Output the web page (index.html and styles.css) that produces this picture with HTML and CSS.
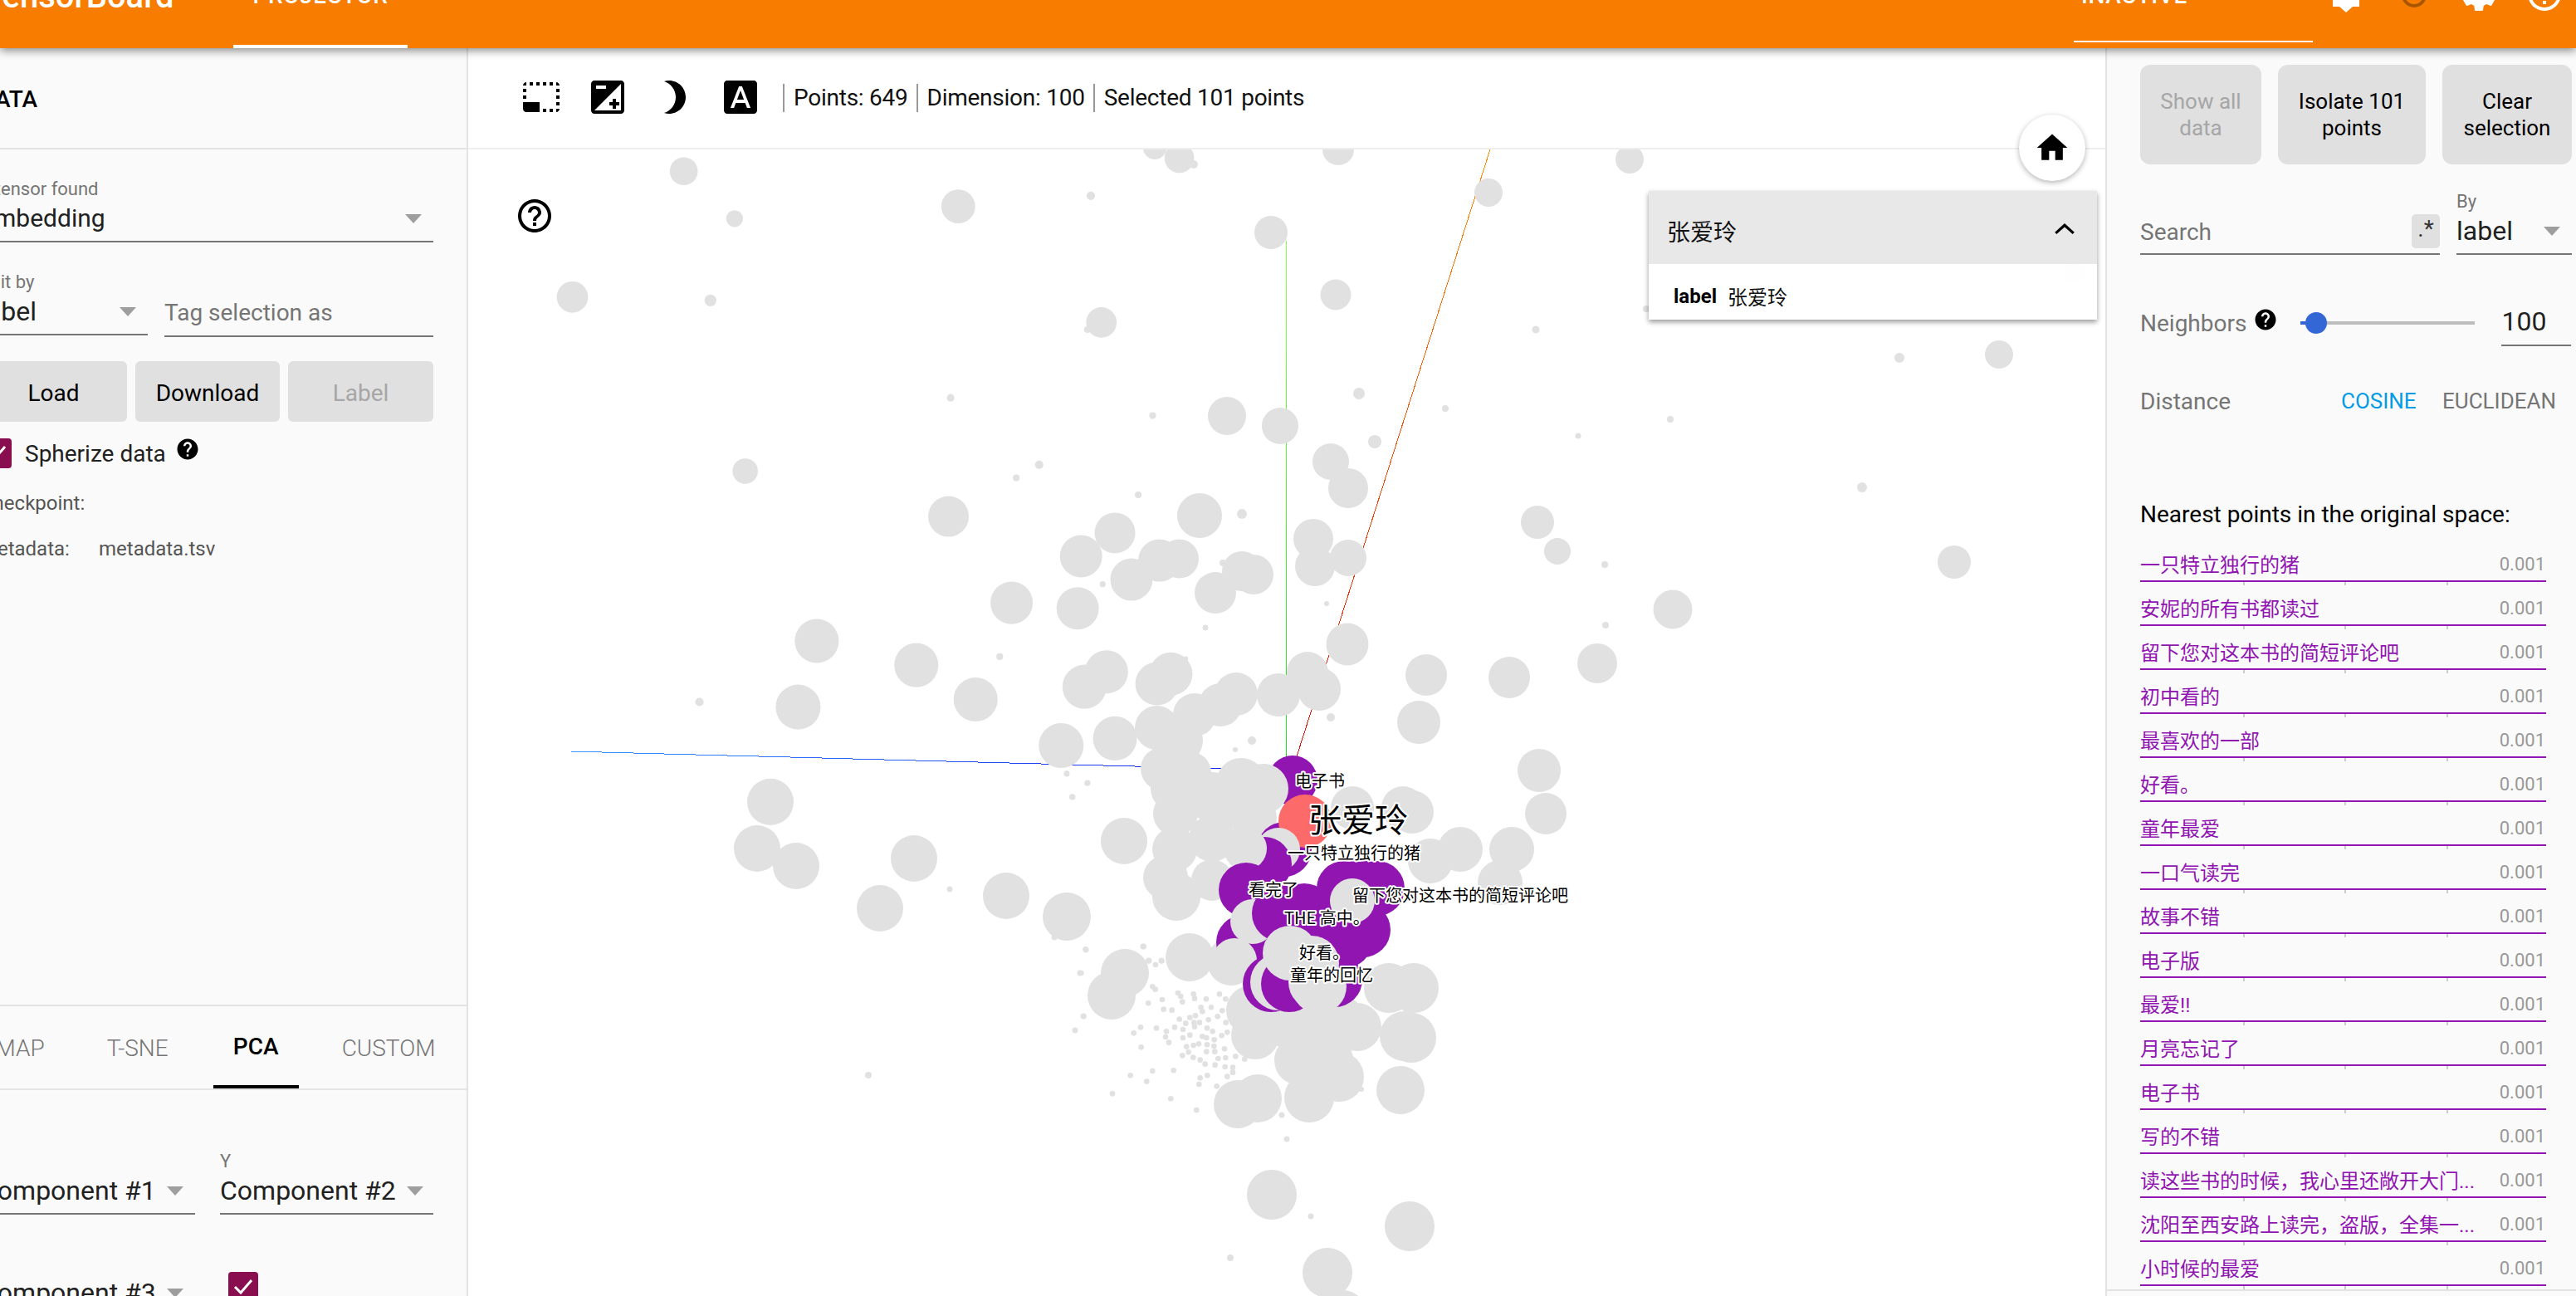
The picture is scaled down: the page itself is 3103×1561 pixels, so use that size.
FILE: index.html
```html
<!DOCTYPE html>
<html lang="en">
<head>
<meta charset="utf-8">
<title>TensorBoard Projector</title>
<link rel="stylesheet" href="styles.css">
</head>
<body>
<header class="topbar">
  <div class="brand">TensorBoard</div>
  <div class="tab-active"><span>PROJECTOR</span></div>
  <div class="run-select"><span>INACTIVE</span></div>
  <svg class="top-icon tag" viewBox="0 0 32 48"><path d="M0 0H32V39H24L16 46L8 39H0Z"/></svg>
  <svg class="top-icon refresh" viewBox="0 0 48 48"><circle cx="24" cy="24" r="13" fill="none" stroke-width="4"/></svg>
  <svg class="top-icon gear" viewBox="0 0 24 24"><path d="M19.43 12.98c.04-.32.07-.64.07-.98s-.03-.66-.07-.98l2.11-1.65c.19-.15.24-.42.12-.64l-2-3.46c-.12-.22-.39-.3-.61-.22l-2.49 1c-.52-.4-1.08-.73-1.69-.98l-.38-2.65C14.46 2.18 14.25 2 14 2h-4c-.25 0-.46.18-.49.42l-.38 2.65c-.61.25-1.17.59-1.69.98l-2.49-1c-.23-.09-.49 0-.61.22l-2 3.46c-.13.22-.07.49.12.64l2.11 1.65c-.04.32-.07.65-.07.98s.03.66.07.98l-2.11 1.65c-.19.15-.24.42-.12.64l2 3.46c.12.22.39.3.61.22l2.49-1c.52.4 1.08.73 1.69.98l.38 2.65c.03.24.24.42.49.42h4c.25 0 .46-.18.49-.42l.38-2.65c.61-.25 1.17-.59 1.69-.98l2.49 1c.23.09.49 0 .61-.22l2-3.46c.12-.22.07-.49-.12-.64l-2.11-1.65zM12 15.5c-1.93 0-3.5-1.57-3.5-3.5s1.57-3.5 3.5-3.5 3.5 1.57 3.5 3.5-1.57 3.5-3.5 3.5z"/></svg>
  <svg class="top-icon help-top" viewBox="0 0 24 24"><path d="M11 18h2v-2h-2v2zm1-16C6.48 2 2 6.48 2 12s4.48 10 10 10 10-4.48 10-10S17.52 2 12 2zm0 18c-4.41 0-8-3.59-8-8s3.59-8 8-8 8 3.59 8 8-3.59 8-8 8zm0-14c-2.21 0-4 1.79-4 4h2c0-1.1.9-2 2-2s2 .9 2 2c0 2-3 1.75-3 5h2c0-2.25 3-2.5 3-5 0-2.21-1.79-4-4-4z"/></svg>
</header>

<main class="layout">
  <aside class="left-panel">
    <div class="left-inner">
      <div class="data-head">DATA</div>
      <section class="data-section">
        <div class="field first-field">
          <div class="field-label">1 tensor found</div>
          <div class="control embed"><span>Embedding</span><i class="caret"></i></div>
        </div>
        <div class="edit-row">
          <div class="field">
            <div class="field-label">Edit by</div>
            <div class="control"><span>label</span><i class="caret"></i></div>
          </div>
          <div class="tag-input">Tag selection as</div>
        </div>
        <div class="btn-row">
          <div class="btn">Load</div>
          <div class="btn">Download</div>
          <div class="btn disabled">Label</div>
        </div>
        <div class="sphere-row">
          <svg class="checkbox" viewBox="0 0 36 36"><path d="M8 18L15 25L28 10"/></svg>
          <span class="sphere-label">Spherize data</span>
          <svg class="help-fill" viewBox="0 0 24 24"><path d="M12 2C6.48 2 2 6.48 2 12s4.48 10 10 10 10-4.48 10-10S17.52 2 12 2zm1 17h-2v-2h2v2zm2.07-7.75l-.9.92C13.45 12.9 13 13.5 13 15h-2v-.5c0-1.1.45-2.1 1.17-2.83l1.24-1.26c.37-.36.59-.86.59-1.41 0-1.1-.9-2-2-2s-2 .9-2 2H8c0-2.21 1.79-4 4-4s4 1.79 4 4c0 .88-.36 1.68-.93 2.25z"/></svg>
        </div>
        <div class="meta-line checkpoint">Checkpoint:</div>
        <div class="meta-line metadata"><span class="meta-key">Metadata:</span><span>metadata.tsv</span></div>
      </section>
      <nav class="proj-tabs">
        <span class="proj-tab umap">UMAP</span>
        <span class="proj-tab tsne">T-SNE</span>
        <span class="proj-tab current">PCA</span>
        <span class="proj-tab">CUSTOM</span>
      </nav>
      <section class="pca-grid">
        <div class="field">
          <div class="field-label">X</div>
          <div class="control"><span>Component #1</span><i class="caret"></i></div>
        </div>
        <div class="field">
          <div class="field-label">Y</div>
          <div class="control"><span>Component #2</span><i class="caret"></i></div>
        </div>
        <div class="field z-field">
          <div class="control"><span>Component #3</span><i class="caret"></i></div>
        </div>
        <div class="z-check">
          <svg class="checkbox" viewBox="0 0 36 36"><path d="M8 18L15 25L28 10"/></svg>
        </div>
      </section>
    </div>
  </aside>

  <section class="center">
    <div class="toolbar">
      <svg class="tool" viewBox="0 0 24 24"><path d="M23 15h-2v2h2v-2zm0-4h-2v2h2v-2zm0 8h-2v2c1 0 2-1 2-2zM15 3h-2v2h2V3zm8 4h-2v2h2V7zm-2-4v2h2c0-1-1-2-2-2zM3 21h8v-6H1v4c0 1.1.9 2 2 2zM3 7H1v2h2V7zm12 12h-2v2h2v-2zm4-16h-2v2h2V3zm0 16h-2v2h2v-2zM3 3C2 3 1 4 1 5h2V3zm0 8H1v2h2v-2zm8-8H9v2h2V3zM7 3H5v2h2V3z"/></svg>
      <svg class="tool" viewBox="0 0 24 24"><path d="M15 17v2h2v-2h2v-2h-2v-2h-2v2h-2v2h2zm5-15H4c-1.1 0-2 .9-2 2v16c0 1.1.9 2 2 2h16c1.1 0 2-.9 2-2V4c0-1.1-.9-2-2-2zM5 5h6v2H5V5zm15 15H4L20 4v16z"/></svg>
      <svg class="tool" viewBox="0 0 24 24"><path d="M9 2c-1.05 0-2.05.16-3 .46 4.06 1.27 7 5.06 7 9.54 0 4.48-2.94 8.27-7 9.54.95.3 1.95.46 3 .46 5.52 0 10-4.48 10-10S14.52 2 9 2z"/></svg>
      <svg class="tool" viewBox="0 0 24 24"><path d="M9.93 13.5h4.14L12 7.98zM20 2H4c-1.1 0-2 .9-2 2v16c0 1.1.9 2 2 2h16c1.1 0 2-.9 2-2V4c0-1.1-.9-2-2-2zm-4.05 16.5l-1.14-3H9.17l-1.12 3H5.96l5.11-13h1.86l5.11 13h-2.09z"/></svg>
      <div class="stats">
        <span>Points: 649</span>
        <span>Dimension: 100</span>
        <span>Selected 101 points</span>
      </div>
    </div>

    <div class="plot">
      <svg class="scatter" viewBox="564 180 1972 1381" preserveAspectRatio="none">
        <defs>
          <linearGradient id="axis-x" gradientUnits="userSpaceOnUse" x1="687" y1="905" x2="1480" y2="926"><stop offset="0" stop-color="#3a96ff"/><stop offset="1" stop-color="#1020ee"/></linearGradient>
          <linearGradient id="axis-y" gradientUnits="userSpaceOnUse" x1="1549" y1="290" x2="1549" y2="930"><stop offset="0" stop-color="#90ff50"/><stop offset="1" stop-color="#18e020"/></linearGradient>
          <linearGradient id="axis-z" gradientUnits="userSpaceOnUse" x1="1795" y1="180" x2="1556" y2="930"><stop offset="0" stop-color="#ff8c00"/><stop offset="1" stop-color="#f00808"/></linearGradient>
        </defs>
        <line class="axis" x1="687" y1="905" x2="1480" y2="926" stroke="url(#axis-x)"/>
        <line class="axis" x1="1549" y1="290" x2="1549" y2="930" stroke="url(#axis-y)"/>
        <line class="axis" x1="1795" y1="180" x2="1556" y2="930" stroke="url(#axis-z)"/>

        <g class="pt" transform="translate(640 170) scale(.5102)">
          <circle cx="360" cy="71" r="33"/><circle cx="480" cy="183" r="20"/><circle cx="1008" cy="154" r="40"/><circle cx="1321" cy="129" r="10"/><circle cx="97" cy="368" r="37"/><circle cx="423" cy="376" r="14"/><circle cx="1346" cy="428" r="36"/><circle cx="1313" cy="445" r="8"/><circle cx="990" cy="606" r="9"/><circle cx="1467" cy="648" r="8"/><circle cx="505" cy="779" r="30"/><circle cx="1199" cy="764" r="10"/><circle cx="1145" cy="795" r="8"/><circle cx="1433" cy="835" r="8"/><circle cx="985" cy="886" r="48"/><circle cx="1378" cy="925" r="48"/><circle cx="1298" cy="980" r="50"/><circle cx="1483" cy="990" r="50"/><circle cx="1530" cy="986" r="46"/><circle cx="1417" cy="1035" r="50"/><circle cx="1349" cy="1046" r="7"/><circle cx="1134" cy="1090" r="50"/><circle cx="1290" cy="1103" r="50"/><circle cx="674" cy="1180" r="52"/><circle cx="909" cy="1237" r="52"/><circle cx="1049" cy="1318" r="52"/><circle cx="630" cy="1336" r="53"/><circle cx="397" cy="1324" r="10"/><circle cx="1106" cy="1217" r="8"/><circle cx="1358" cy="1253" r="51"/><circle cx="1306" cy="1288" r="52"/><circle cx="1510" cy="1258" r="51"/><circle cx="1477" cy="1281" r="51"/><circle cx="1251" cy="1427" r="53"/><circle cx="1378" cy="1410" r="52"/><circle cx="1477" cy="1385" r="52"/><circle cx="1264" cy="1492" r="6"/><circle cx="1312" cy="1516" r="6"/><circle cx="1277" cy="1548" r="7"/><circle cx="565" cy="1558" r="53"/><circle cx="1472" cy="15" r="28"/><circle cx="1530" cy="40" r="35"/><circle cx="1570" cy="885" r="45"/><circle cx="1545" cy="1222" r="6"/>
        </g>

        <g class="pt">
          <circle cx="1438" cy="198" r="5"/><circle cx="1612" cy="180" r="19"/><circle cx="1963" cy="192" r="17"/><circle cx="1793" cy="232" r="17"/><circle cx="1531" cy="280" r="20"/><circle cx="1609" cy="355" r="18.5"/><circle cx="1850" cy="397" r="4.5"/><circle cx="2288" cy="431" r="6"/><circle cx="2408" cy="427" r="17"/><circle cx="1637" cy="474" r="7"/><circle cx="1741" cy="492" r="4"/><circle cx="1478" cy="501" r="23"/><circle cx="1542" cy="513" r="22"/><circle cx="2012" cy="505" r="4"/><circle cx="1901" cy="525" r="3.5"/><circle cx="1656" cy="532" r="8"/><circle cx="1603" cy="556" r="22"/><circle cx="1624" cy="588" r="24"/><circle cx="1496" cy="619" r="6"/><circle cx="1445" cy="621" r="27"/><circle cx="2243" cy="587" r="6"/><circle cx="1852" cy="629" r="20"/><circle cx="1876" cy="664" r="16"/><circle cx="1933" cy="680" r="4"/><circle cx="2354" cy="677" r="20"/><circle cx="1582" cy="649" r="24"/><circle cx="1584" cy="682" r="24"/><circle cx="1624" cy="672" r="22"/><circle cx="1496" cy="688" r="24"/><circle cx="1510" cy="692" r="24"/><circle cx="1464" cy="714" r="25"/><circle cx="1473" cy="678" r="4"/><circle cx="1598" cy="727" r="3"/><circle cx="1452" cy="756" r="3.5"/><circle cx="1934" cy="753" r="4"/><circle cx="2015" cy="734" r="23.5"/><circle cx="1623" cy="776" r="25.5"/><circle cx="1924" cy="799" r="24"/><circle cx="1718" cy="813" r="25"/><circle cx="1818" cy="816" r="25"/><circle cx="1575" cy="810" r="25"/><circle cx="1589" cy="830" r="26"/><circle cx="1540" cy="837" r="26"/><circle cx="1489" cy="836" r="26"/><circle cx="1470" cy="849" r="26"/><circle cx="1439" cy="861" r="26"/><circle cx="1603" cy="864" r="5"/><circle cx="1508" cy="892" r="5"/><circle cx="1488" cy="903" r="3"/><circle cx="1709" cy="870" r="26"/><circle cx="1854" cy="928" r="26"/><circle cx="1862" cy="980" r="25"/><circle cx="1821" cy="1023" r="27"/><circle cx="1807" cy="1063" r="27"/><circle cx="1759" cy="1023" r="27"/><circle cx="1723" cy="1037" r="27"/><circle cx="1701" cy="978" r="26"/><circle cx="1690" cy="973" r="26"/><circle cx="1629" cy="973" r="26"/><circle cx="1354" cy="1013" r="28"/><circle cx="1421" cy="892" r="28"/><circle cx="1400" cy="926" r="26"/><circle cx="1433" cy="931" r="26"/><circle cx="1413" cy="950" r="27"/><circle cx="1416" cy="980" r="27"/><circle cx="1415" cy="1023" r="27"/><circle cx="1404" cy="1057" r="27"/><circle cx="1417" cy="1080" r="29"/><circle cx="1460" cy="1060" r="25"/><circle cx="1460" cy="960" r="30"/><circle cx="1495" cy="943" r="30"/><circle cx="1492" cy="970" r="28"/><circle cx="1510" cy="985" r="28"/><circle cx="1460" cy="1010" r="28"/>
          <circle cx="928" cy="966" r="28"/><circle cx="912" cy="1022" r="28"/><circle cx="959" cy="1043" r="28"/><circle cx="1101" cy="1034" r="28"/><circle cx="1060" cy="1094" r="28"/><circle cx="1212" cy="1079" r="28"/><circle cx="1285" cy="1104" r="29"/>
          <circle cx="1355" cy="1172" r="29"/><circle cx="1339" cy="1199" r="29"/><circle cx="1433" cy="1153" r="29"/><circle cx="1483" cy="1158" r="29"/><circle cx="1507" cy="1217" r="30"/><circle cx="1512" cy="1247" r="29"/><circle cx="1540" cy="1230" r="30"/><circle cx="1567" cy="1232" r="30"/><circle cx="1587" cy="1225" r="30"/><circle cx="1613" cy="1228" r="30"/><circle cx="1635" cy="1237" r="29"/><circle cx="1673" cy="1190" r="30"/><circle cx="1703" cy="1190" r="30"/><circle cx="1692" cy="1248" r="30"/><circle cx="1700" cy="1250" r="30"/><circle cx="1565" cy="1277" r="30"/><circle cx="1600" cy="1277" r="30"/><circle cx="1613" cy="1297" r="30"/><circle cx="1577" cy="1322" r="30"/><circle cx="1687" cy="1313" r="29"/><circle cx="1491" cy="1330" r="29"/><circle cx="1515" cy="1323" r="29"/><circle cx="1532" cy="1439" r="30"/><circle cx="1698" cy="1477" r="30"/><circle cx="1599" cy="1533" r="30"/><circle cx="1617" cy="1584" r="30"/>
          <circle cx="1579" cy="1465" r="3.5"/><circle cx="1482" cy="1515" r="4"/><circle cx="1550" cy="1372" r="3.5"/><circle cx="1544" cy="1343" r="3.5"/><circle cx="1640" cy="1312" r="3"/><circle cx="1285" cy="932" r="3.5"/><circle cx="1310" cy="943" r="3.5"/><circle cx="1292" cy="960" r="3.5"/><circle cx="1144" cy="1071" r="3.5"/><circle cx="1270" cy="1129" r="3.5"/><circle cx="1308" cy="1144" r="3.5"/><circle cx="1301" cy="1172" r="3.5"/><circle cx="1377" cy="1140" r="3.5"/><circle cx="1384" cy="1157" r="3.5"/><circle cx="1392" cy="1162" r="3"/><circle cx="1399" cy="1157" r="3.5"/><circle cx="1305" cy="1224" r="3.5"/><circle cx="1295" cy="1241" r="3.5"/><circle cx="1046" cy="1295" r="4"/><circle cx="2499" cy="328" r="13.5"/><circle cx="1983" cy="372" r="4"/>
        </g>

        <g class="pt" transform="translate(1300 1100) scale(.3333)">
          <circle cx="23" cy="130" r="10"/><circle cx="233" cy="120" r="10"/><circle cx="7" cy="216" r="10"/><circle cx="16" cy="372" r="10"/><circle cx="250" cy="172" r="10"/><circle cx="276" cy="186" r="10"/><circle cx="298" cy="172" r="10"/><circle cx="265" cy="265" r="10"/><circle cx="275" cy="275" r="10"/><circle cx="250" cy="325" r="10"/><circle cx="300" cy="312" r="10"/><circle cx="305" cy="347" r="10"/><circle cx="335" cy="350" r="10"/><circle cx="357" cy="288" r="10"/><circle cx="367" cy="300" r="10"/><circle cx="373" cy="320" r="10"/><circle cx="413" cy="292" r="10"/><circle cx="417" cy="308" r="10"/><circle cx="459" cy="310" r="10"/><circle cx="507" cy="292" r="10"/><circle cx="529" cy="310" r="10"/><circle cx="440" cy="340" r="10"/><circle cx="445" cy="355" r="10"/><circle cx="477" cy="340" r="10"/><circle cx="517" cy="352" r="10"/><circle cx="500" cy="373" r="10"/><circle cx="400" cy="377" r="10"/><circle cx="420" cy="370" r="10"/><circle cx="362" cy="383" r="10"/><circle cx="385" cy="398" r="10"/><circle cx="415" cy="395" r="10"/><circle cx="435" cy="395" r="10"/><circle cx="467" cy="385" r="10"/><circle cx="345" cy="412" r="10"/><circle cx="375" cy="420" r="10"/><circle cx="417" cy="410" r="10"/><circle cx="462" cy="415" r="10"/><circle cx="482" cy="427" r="10"/><circle cx="222" cy="412" r="10"/><circle cx="197" cy="433" r="10"/><circle cx="279" cy="415" r="10"/><circle cx="315" cy="427" r="10"/><circle cx="312" cy="447" r="10"/><circle cx="375" cy="450" r="10"/><circle cx="400" cy="440" r="10"/><circle cx="445" cy="445" r="10"/><circle cx="460" cy="450" r="10"/><circle cx="515" cy="442" r="10"/><circle cx="324" cy="467" r="10"/><circle cx="224" cy="484" r="10"/><circle cx="388" cy="482" r="10"/><circle cx="413" cy="477" r="10"/><circle cx="432" cy="472" r="10"/><circle cx="462" cy="475" r="10"/><circle cx="488" cy="457" r="10"/><circle cx="487" cy="480" r="10"/><circle cx="395" cy="502" r="10"/><circle cx="460" cy="500" r="10"/><circle cx="490" cy="500" r="10"/><circle cx="525" cy="490" r="10"/><circle cx="373" cy="514" r="10"/><circle cx="412" cy="521" r="10"/><circle cx="437" cy="530" r="10"/><circle cx="455" cy="545" r="10"/><circle cx="502" cy="525" r="10"/><circle cx="529" cy="522" r="10"/><circle cx="565" cy="517" r="10"/><circle cx="598" cy="527" r="10"/><circle cx="491" cy="548" r="10"/><circle cx="527" cy="555" r="10"/><circle cx="555" cy="557" r="10"/><circle cx="265" cy="570" r="10"/><circle cx="341" cy="568" r="10"/><circle cx="185" cy="586" r="10"/><circle cx="244" cy="608" r="10"/><circle cx="437" cy="595" r="10"/><circle cx="463" cy="586" r="10"/><circle cx="535" cy="590" r="10"/><circle cx="555" cy="575" r="10"/><circle cx="433" cy="618" r="10"/><circle cx="497" cy="625" r="10"/><circle cx="120" cy="652" r="10"/><circle cx="331" cy="670" r="10"/><circle cx="424" cy="711" r="10"/><circle cx="535" cy="430" r="10"/><circle cx="530" cy="395" r="10"/>
        </g>

        <g class="sel"><circle cx="1557" cy="940" r="30"/><circle cx="1547" cy="1023" r="33"/></g>
        <circle class="hit" cx="1572" cy="989" r="32"/>
        <g class="pt"><circle cx="1522" cy="950" r="30"/><circle cx="1540" cy="1023" r="26"/></g>
        <g class="sel"><circle cx="1523" cy="1041" r="33"/></g>
        <g class="pt"><circle cx="1500" cy="1022" r="26"/></g>
        <g class="sel"><circle cx="1501" cy="1072" r="33"/><circle cx="1498" cy="1135" r="33"/></g>
        <g class="pt"><circle cx="1509" cy="1110" r="27"/><circle cx="1487" cy="1157" r="27"/></g>
        <g class="sel"><circle cx="1542" cy="1100" r="34"/><circle cx="1571" cy="1098" r="34"/><circle cx="1619" cy="1070" r="33"/><circle cx="1639" cy="1068" r="33"/><circle cx="1659" cy="1070" r="33"/><circle cx="1642" cy="1120" r="33"/><circle cx="1620" cy="1133" r="33"/></g>
        <g class="pt"><circle cx="1629" cy="1085" r="27"/></g>
        <g class="sel"><circle cx="1531" cy="1185" r="34"/></g>
        <g class="pt"><circle cx="1540" cy="1183" r="34"/></g>
        <g class="sel"><circle cx="1553" cy="1185" r="34"/><circle cx="1608" cy="1180" r="33"/></g>
        <g class="pt"><circle cx="1554" cy="1148" r="33"/><circle cx="1580" cy="1160" r="33"/><circle cx="1585" cy="1183" r="33"/><circle cx="1589" cy="1188" r="33"/></g>

        <text class="lbl" x="1560" y="939">电子书</text>
        <text class="lbl big" x="1576" y="985">张爱玲</text>
        <text class="lbl" x="1551" y="1026">一只特立独行的猪</text>
        <text class="lbl" x="1504" y="1070">看完了</text>
        <text class="lbl" x="1629" y="1077">留下您对这本书的简短评论吧</text>
        <text class="lbl" x="1547" y="1104">THE 高中。</text>
        <text class="lbl" x="1565" y="1146">好看。</text>
        <text class="lbl" x="1554" y="1173">童年的回忆</text>
      </svg>
    </div>

    <svg class="plot-help" viewBox="0 0 24 24"><path d="M11 18h2v-2h-2v2zm1-16C6.48 2 2 6.48 2 12s4.48 10 10 10 10-4.48 10-10S17.52 2 12 2zm0 18c-4.41 0-8-3.59-8-8s3.59-8 8-8 8 3.59 8 8-3.59 8-8 8zm0-14c-2.21 0-4 1.79-4 4h2c0-1.1.9-2 2-2s2 .9 2 2c0 2-3 1.75-3 5h2c0-2.25 3-2.5 3-5 0-2.21-1.79-4-4-4z"/></svg>
    <div class="home-btn"><svg viewBox="0 0 24 24"><path d="M10 20v-6h4v6h5v-8h3L12 3 2 12h3v8z"/></svg></div>

    <div class="point-card">
      <div class="card-head">
        <span>张爱玲</span>
        <svg viewBox="0 0 24 14"><path d="M2 12L12 3L22 12"/></svg>
      </div>
      <div class="card-body"><b>label</b><span>张爱玲</span></div>
    </div>
  </section>

  <aside class="right-panel">
    <div class="action-row">
      <div class="btn tall disabled">Show all<br>data</div>
      <div class="btn tall">Isolate 101<br>points</div>
      <div class="btn tall">Clear<br>selection</div>
    </div>
    <div class="search-row">
      <div class="search-box"><span>Search</span><i class="regex">.*</i></div>
      <div class="field">
        <div class="field-label">By</div>
        <div class="control"><span>label</span><i class="caret"></i></div>
      </div>
    </div>
    <div class="neighbors-row">
      <span class="muted">Neighbors</span>
      <svg class="help-fill" viewBox="0 0 24 24"><path d="M12 2C6.48 2 2 6.48 2 12s4.48 10 10 10 10-4.48 10-10S17.52 2 12 2zm1 17h-2v-2h2v2zm2.07-7.75l-.9.92C13.45 12.9 13 13.5 13 15h-2v-.5c0-1.1.45-2.1 1.17-2.83l1.24-1.26c.37-.36.59-.86.59-1.41 0-1.1-.9-2-2-2s-2 .9-2 2H8c0-2.21 1.79-4 4-4s4 1.79 4 4c0 .88-.36 1.68-.93 2.25z"/></svg>
      <div class="slider"><i class="slider-fill"></i><i class="slider-knob"></i></div>
      <div class="neighbor-value">100</div>
    </div>
    <div class="distance-row">
      <span class="muted">Distance</span>
      <span class="metric active">COSINE</span>
      <span class="metric">EUCLIDEAN</span>
    </div>
    <div class="nearest-title">Nearest points in the original space:</div>
    <ul class="nearest">
      <li><div class="nn-text"><span>一只特立独行的猪</span><span class="nn-val">0.001</span></div><div class="nn-bar"></div></li>
      <li><div class="nn-text"><span>安妮的所有书都读过</span><span class="nn-val">0.001</span></div><div class="nn-bar"></div></li>
      <li><div class="nn-text"><span>留下您对这本书的简短评论吧</span><span class="nn-val">0.001</span></div><div class="nn-bar"></div></li>
      <li><div class="nn-text"><span>初中看的</span><span class="nn-val">0.001</span></div><div class="nn-bar"></div></li>
      <li><div class="nn-text"><span>最喜欢的一部</span><span class="nn-val">0.001</span></div><div class="nn-bar"></div></li>
      <li><div class="nn-text"><span>好看。</span><span class="nn-val">0.001</span></div><div class="nn-bar"></div></li>
      <li><div class="nn-text"><span>童年最爱</span><span class="nn-val">0.001</span></div><div class="nn-bar"></div></li>
      <li><div class="nn-text"><span>一口气读完</span><span class="nn-val">0.001</span></div><div class="nn-bar"></div></li>
      <li><div class="nn-text"><span>故事不错</span><span class="nn-val">0.001</span></div><div class="nn-bar"></div></li>
      <li><div class="nn-text"><span>电子版</span><span class="nn-val">0.001</span></div><div class="nn-bar"></div></li>
      <li><div class="nn-text"><span>最爱!!</span><span class="nn-val">0.001</span></div><div class="nn-bar"></div></li>
      <li><div class="nn-text"><span>月亮忘记了</span><span class="nn-val">0.001</span></div><div class="nn-bar"></div></li>
      <li><div class="nn-text"><span>电子书</span><span class="nn-val">0.001</span></div><div class="nn-bar"></div></li>
      <li><div class="nn-text"><span>写的不错</span><span class="nn-val">0.001</span></div><div class="nn-bar"></div></li>
      <li><div class="nn-text"><span>读这些书的时候，我心里还敞开大门...</span><span class="nn-val">0.001</span></div><div class="nn-bar"></div></li>
      <li><div class="nn-text"><span>沈阳至西安路上读完，盗版，全集一...</span><span class="nn-val">0.001</span></div><div class="nn-bar"></div></li>
      <li><div class="nn-text"><span>小时候的最爱</span><span class="nn-val">0.001</span></div><div class="nn-bar"></div></li>
    </ul>
    <div class="nearest-end"></div>
  </aside>
</main>
</body>
</html>
```

FILE: styles.css
```css
* { box-sizing: border-box; }
html, body { margin: 0; padding: 0; }
body {
  width: 3103px;
  height: 1561px;
  overflow: hidden;
  background: #fff;
  color: #212121;
  font-family: Roboto, "Noto Sans CJK SC", sans-serif;
  font-size: 28px;
}

.topbar {
  position: relative;
  z-index: 3;
  display: flex;
  align-items: flex-start;
  height: 58px;
  overflow: hidden;
  background: #f77c00;
  color: #fff;
  box-shadow: 0 3px 10px rgba(0, 0, 0, .45);
}
.brand {
  margin: -24px 0 0 -20px;
  width: 301px;
  font-size: 40px;
  line-height: 40px;
  font-weight: 500;
  white-space: nowrap;
}
.tab-active {
  width: 210px;
  height: 58px;
  border-bottom: 4px solid #fff;
  text-align: center;
  font-size: 28px;
  font-weight: 500;
  line-height: 28px;
  letter-spacing: .6px;
}
.tab-active span { display: block; margin-top: -19px; }
.run-select {
  width: 288px;
  height: 51px;
  margin-left: 2007px;
  padding-left: 9px;
  border-bottom: 2px solid #fff;
  font-size: 28px;
  font-weight: 500;
  line-height: 28px;
  letter-spacing: .6px;
}
.run-select span { display: block; margin-top: -19px; }
.top-icon { flex: none; fill: #fff; }
.tag { width: 32px; height: 48px; margin: -31px 0 0 24px; }
.refresh { width: 48px; height: 48px; margin: -30px 0 0 42px; stroke: #a85500; fill: none; }
.gear { width: 48px; height: 48px; margin: -31px 0 0 30px; }
.help-top { width: 48px; height: 48px; margin: -31px 0 0 31px; }

/* three columns */
.layout { display: flex; height: 1503px; }

.left-panel {
  flex: 0 0 564px;
  border-right: 2px solid #e3e3e3;
  background: #fafafa;
  overflow: hidden;
}
.left-inner { width: 546px; margin-left: -24px; }
.data-head {
  height: 122px;
  margin-right: -40px;
  padding-top: 43px;
  border-bottom: 2px solid #e3e3e3;
  font-size: 28px;
  font-weight: 500;
  line-height: 38px;
  color: #000;
}
.data-section { height: 1030px; padding-top: 34px; }

.field-label { height: 28px; font-size: 22px; line-height: 28px; color: #757575; }
.control {
  display: flex;
  align-items: center;
  justify-content: space-between;
  height: 50px;
  padding: 0 14px 6px 0;
  border-bottom: 2px solid #757575;
  font-size: 32px;
  line-height: 38px;
  color: #212121;
  white-space: nowrap;
}
.control.embed { font-size: 30px; }
.caret {
  flex: none;
  width: 0;
  height: 0;
  border-left: 10px solid transparent;
  border-right: 10px solid transparent;
  border-top: 11px solid #9e9e9e;
}
.edit-row { display: grid; grid-template-columns: 202px 324px; gap: 20px; margin-top: 34px; }
.tag-input {
  align-self: end;
  height: 50px;
  margin-bottom: -2px;
  padding-top: 2px;
  border-bottom: 2px solid #757575;
  font-size: 28px;
  line-height: 38px;
  color: #757575;
}
.btn-row { display: grid; grid-template-columns: 177px 174px 175px; gap: 10px; margin-top: 31px; }
.btn {
  display: flex;
  align-items: center;
  justify-content: center;
  height: 73px;
  padding-top: 3px;
  border-radius: 6px;
  background: #e0e0e0;
  color: #000;
  font-size: 28px;
  text-align: center;
}
.btn.disabled { color: #a6a6a6; }
.sphere-row { display: flex; align-items: center; height: 36px; margin: 20px 0 0 2px; }
.checkbox { flex: none; width: 36px; height: 36px; border-radius: 4px; background: #880e4f; fill: none; stroke: #fff; stroke-width: 3; }
.sphere-label { margin-left: 16px; font-size: 28px; color: #212121; }
.help-fill { flex: none; width: 30px; height: 30px; fill: #000; }
.sphere-row .help-fill { margin: -10px 0 0 11px; }
.meta-line { font-size: 24px; line-height: 32px; color: #555; }
.checkpoint { margin-top: 26px; }
.metadata { display: flex; margin-top: 23px; }
.meta-key { width: 143px; }

.proj-tabs {
  display: flex;
  align-items: flex-end;
  height: 103px;
  margin-right: -40px;
  border-top: 2px solid #e3e3e3;
  border-bottom: 2px solid #e3e3e3;
  font-size: 28px;
}
.proj-tab {
  display: block;
  flex: none;
  height: 99px;
  padding-top: 33px;
  margin-right: 52px;
  line-height: 36px;
  font-weight: 300;
  color: #757575;
  white-space: nowrap;
}
.proj-tab.umap { margin-right: 75px; }
.proj-tab.tsne { margin-right: 54px; }
.proj-tab.current {
  width: 103px;
  padding-top: 31px;
  border-bottom: 4px solid #000;
  text-align: center;
  font-weight: 500;
  color: #000;
}
.pca-grid { display: grid; grid-template-columns: 259px 257px; column-gap: 30px; row-gap: 73px; margin-top: 72px; }
.pca-grid .control { justify-content: flex-start; gap: 13px; }
.z-check { margin: -4px 0 0 10px; }

/* centre */
.center { position: relative; flex: 1 1 auto; display: flex; flex-direction: column; min-width: 0; }
.toolbar {
  flex: 0 0 122px;
  display: flex;
  align-items: center;
  gap: 32px;
  padding: 0 0 3px 64px;
  border-bottom: 2px solid #eee;
}
.tool { flex: none; width: 48px; height: 48px; fill: #000; }
.stats { display: flex; margin: 2px 0 0 -5px; font-size: 28px; letter-spacing: -.25px; color: #111; }
.stats span { padding: 0 10px 0 11px; border-left: 2px solid #999; line-height: 34px; white-space: nowrap; }
.plot { position: relative; flex: 1 1 auto; overflow: hidden; }
.scatter { position: absolute; inset: 0; width: 100%; height: 100%; display: block; }
.axis { shape-rendering: crispEdges; }
.pt { fill: #e1e1e1; }
.sel { fill: #9015b1; }
.hit { fill: #fc6a6a; }
.lbl {
  font-family: "Noto Sans CJK SC", Roboto, sans-serif;
  font-size: 20px;
  dominant-baseline: central;
  fill: #000;
  stroke: #fff;
  stroke-width: 4px;
  paint-order: stroke;
  stroke-linejoin: round;
}
.lbl.big { font-size: 40px; }
.plot-help { position: absolute; left: 56px; top: 178px; width: 48px; height: 48px; fill: #000; }
.home-btn {
  position: absolute;
  left: 1868px;
  top: 80px;
  display: flex;
  align-items: center;
  justify-content: center;
  width: 80px;
  height: 80px;
  border-radius: 50%;
  background: #fff;
  box-shadow: 0 2px 6px rgba(0, 0, 0, .3);
}
.home-btn svg { width: 44px; height: 44px; fill: #000; }
.point-card {
  position: absolute;
  left: 1422px;
  top: 172px;
  width: 540px;
  box-shadow: 0 3px 6px rgba(0, 0, 0, .4);
}
.card-head {
  display: flex;
  align-items: center;
  justify-content: space-between;
  height: 88px;
  padding: 2px 26px 0 22px;
  background: #e8e8e8;
  font-size: 28px;
  color: #111;
}
.card-head span { margin-top: 6px; }
.card-head svg { width: 26px; height: 15px; fill: none; stroke: #000; stroke-width: 3; }
.card-body {
  display: flex;
  align-items: center;
  gap: 13px;
  height: 67px;
  padding: 10px 0 0 30px;
  background: rgba(255, 255, 255, .96);
  font-size: 24px;
  color: #111;
}
.card-body b { font-weight: 700; color: #000; }

/* right */
.right-panel {
  flex: 0 0 567px;
  padding: 20px 5px 0 40px;
  border-left: 2px solid #e3e3e3;
  background: #fafafa;
  overflow: hidden;
}
.action-row { display: grid; grid-template-columns: 146px 178px 156px; gap: 20px; }
.btn.tall { height: 120px; padding-top: 0; border-radius: 12px; font-size: 26px; line-height: 32px; }
.search-row { display: grid; grid-template-columns: 361px 139px; gap: 20px; margin-top: 31px; }
.search-box {
  display: flex;
  align-items: flex-end;
  justify-content: space-between;
  height: 78px;
  border-bottom: 2px solid #757575;
  padding-bottom: 6px;
  font-size: 28px;
  line-height: 38px;
  color: #757575;
}
.regex {
  width: 34px;
  height: 41px;
  border-radius: 5px;
  background: #e0e0e0;
  color: #333;
  font-style: normal;
  font-size: 28px;
  line-height: 36px;
  text-align: center;
}
.search-row .control { padding-right: 14px; }
.neighbors-row { display: flex; align-items: center; height: 56px; margin-top: 54px; }
.muted { color: #757575; font-size: 28px; }
.neighbors-row .help-fill { margin: -8px 0 0 8px; }
.slider { position: relative; flex: none; width: 210px; height: 4px; margin-left: 27px; background: #bdbdbd; }
.slider-fill { position: absolute; left: 0; top: 0; width: 19px; height: 4px; background: #3367d6; }
.slider-knob { position: absolute; left: 6px; top: -11px; width: 26px; height: 26px; border-radius: 50%; background: #3367d6; }
.neighbor-value {
  flex: none;
  width: 84px;
  height: 56px;
  margin-left: 32px;
  padding-top: 4px;
  border-bottom: 2px solid #757575;
  font-size: 32px;
  line-height: 44px;
  color: #212121;
}
.distance-row { display: flex; align-items: center; height: 40px; margin-top: 46px; }
.distance-row .muted { width: 242px; }
.metric { width: 122px; font-size: 26px; color: #757575; white-space: nowrap; }
.metric.active { color: #039be5; }
.nearest-title { height: 36px; margin-top: 99px; font-size: 28px; line-height: 36px; color: #000; }
.nearest { width: 489px; margin: 16px 0 0; padding: 0; list-style: none; }
.nearest li { margin-bottom: 2px; }
.nearest li:last-child { margin-bottom: 0; }
.nn-text {
  display: flex;
  justify-content: space-between;
  height: 45px;
  padding: 9px 1px 0 0;
  font-size: 24px;
  line-height: 36px;
  color: #9015b1;
  white-space: nowrap;
}
.nn-val { margin-top: -1px; font-size: 22px; color: #999; }
.nn-bar {
  height: 6px;
  border-top: 2px solid #9015b1;
  background-image: linear-gradient(#ccc, #ccc), linear-gradient(#ccc, #ccc), linear-gradient(#ccc, #ccc);
  background-size: 2px 4px;
  background-position: 124px 0, 246px 0, 369px 0;
  background-repeat: no-repeat;
}
.nearest-end { height: 2px; margin: 0 -5px 0 -40px; background: #e3e3e3; }
```
